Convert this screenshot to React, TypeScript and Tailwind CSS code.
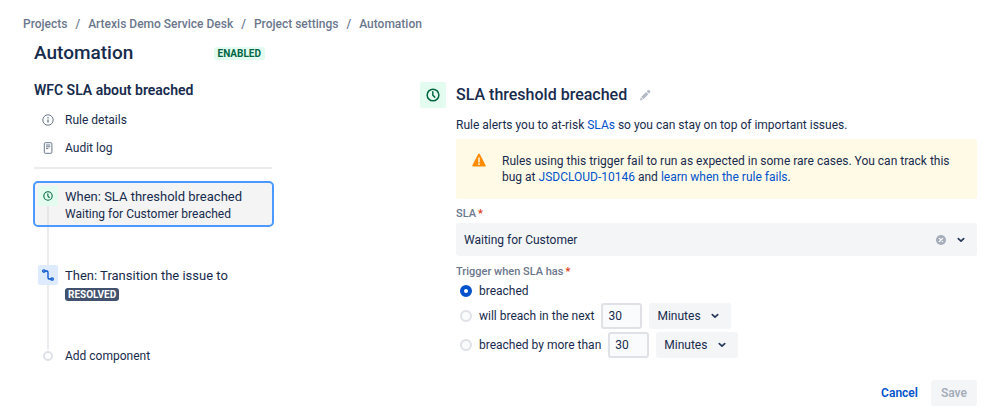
import React, { useState } from "react";

const breadcrumbs = ["Projects", "Artexis Demo Service Desk", "Project settings", "Automation"];

// --- Icons ---

function ClockIcon({ className }: { className?: string }) {
  return (
    <svg viewBox="0 0 16 16" fill="none" stroke="currentColor" strokeWidth="1.7" strokeLinecap="round" strokeLinejoin="round" className={className} aria-hidden={true}>
      <circle cx="8" cy="8" r="6.7" />
      <path d="M7.8 4.4v3.8l2.2 2.2" />
    </svg>
  );
}

function InfoIcon() {
  return (
    <svg viewBox="0 0 12 12" className="size-3 text-[#6b778c]" fill="none" stroke="currentColor" aria-hidden={true}>
      <circle cx="6" cy="6" r="5.2" />
      <path d="M6 5.4v3" strokeWidth="1.4" />
      <circle cx="6" cy="3.7" r="0.8" fill="currentColor" stroke="none" />
    </svg>
  );
}

function LogIcon() {
  return (
    <svg viewBox="0 0 12 12" className="size-3 text-[#6b778c]" fill="none" stroke="currentColor" aria-hidden={true}>
      <rect x="2.3" y="0.7" width="7.6" height="10.6" rx="1" />
      <path d="M4 3h4.2M4 4.8h4.2M4 6.6h2.4" />
    </svg>
  );
}

function TransitionIcon() {
  return (
    <svg viewBox="0 0 12 12" className="size-3 text-[#0052cc]" fill="none" stroke="currentColor" strokeWidth="1.3" aria-hidden={true}>
      <circle cx="1.9" cy="2" r="1.2" />
      <circle cx="10.1" cy="10" r="1.2" />
      <path d="M3.1 2h1.7Q6 2 6 3.2v5.6Q6 10 7.2 10h1.7" />
    </svg>
  );
}

function PencilIcon() {
  return (
    <svg viewBox="0 0 12 12" className="size-3" fill="currentColor" aria-hidden={true}>
      <path d="M8.9 1.2a1 1 0 0 1 1.4 0l.8.8a1 1 0 0 1 0 1.4l-1.2 1.2-2.2-2.2zM7.1 3l2.3 2.3-4.9 4.9-2.3-2.3zM1.7 8.4 4 10.7 1 11.4z" />
    </svg>
  );
}

function WarningIcon() {
  return (
    <svg viewBox="0 0 14 14" className="size-[14px] shrink-0" aria-hidden={true}>
      <path d="M6.2.9a.9.9 0 0 1 1.6 0l5.8 11.3a.9.9 0 0 1-.8 1.3H1.2a.9.9 0 0 1-.8-1.3z" fill="#ff8b00" />
      <path d="M7 5v4" stroke="#fffae6" strokeWidth="1.5" strokeLinecap="round" />
      <circle cx="7" cy="11.2" r="0.9" fill="#fffae6" />
    </svg>
  );
}

function ChevronIcon() {
  return (
    <svg viewBox="0 0 8 8" className="size-2 text-[#253858]" fill="none" stroke="currentColor" strokeWidth="1.7" strokeLinecap="round" strokeLinejoin="round" aria-hidden={true}>
      <path d="M1.3 2.7 4 5.2l2.7-2.5" />
    </svg>
  );
}

function ClearIcon() {
  return (
    <svg viewBox="0 0 10 10" className="size-[10px]" aria-hidden={true}>
      <circle cx="5" cy="5" r="5" fill="#a5adba" />
      <path d="M3.3 3.3l3.4 3.4M6.7 3.3 3.3 6.7" stroke="#fff" strokeWidth="1.2" strokeLinecap="round" />
    </svg>
  );
}

// --- Form parts ---

function Required() {
  return <span className="ml-0.5 text-[#de350b]">*</span>;
}

type DelayOptionProps = {
  id: string;
  label: string;
  checked: boolean;
  onSelect: (id: string) => void;
};

const radioClass =
  "size-3 shrink-0 appearance-none rounded-full border-2 border-[#dfe1e6] bg-[#fafbfc] checked:border-4 checked:border-[#0052cc] checked:bg-white";

function DelayOption({ id, label, checked, onSelect }: DelayOptionProps) {
  return (
    <div className="flex items-center">
      <input type="radio" id={id} name="trigger" checked={checked} onChange={() => onSelect(id)} className={radioClass} />
      <label htmlFor={id} className="pl-[7px]">
        {label}
      </label>
      <input
        type="text"
        defaultValue="30"
        aria-label={`${label} amount`}
        className="ml-[7px] h-[26px] w-[41px] rounded-[3px] border-2 border-[#dfe1e6] bg-[#fafbfc] px-[5px]"
      />
      <div className="relative ml-[7px]">
        <select aria-label={`${label} unit`} className="block h-[26px] w-[82px] appearance-none rounded-[3px] bg-[#f4f5f7] pl-2">
          <option>Minutes</option>
          <option>Hours</option>
          <option>Days</option>
        </select>
        <span className="pointer-events-none absolute inset-y-0 right-3 flex items-center">
          <ChevronIcon />
        </span>
      </div>
    </div>
  );
}

// --- Sections ---

function RuleSidebar() {
  return (
    <aside className="w-60 shrink-0">
      <div className="flex h-[22px] items-center justify-between pr-[9px]">
        <h1 className="text-[19px] leading-[22px] font-medium">Automation</h1>
        <span className="rounded-[3px] bg-[#e3fcef] px-1 text-[10px] leading-[13px] font-bold text-[#006644]">ENABLED</span>
      </div>
      <h2 className="mt-[17px] text-[14px] leading-[18px] font-semibold">WFC SLA about breached</h2>

      <nav className="mt-[7px] flex flex-col" aria-label="Rule">
        <a href="#details" className="flex h-7 items-center gap-[11px] pl-2">
          <InfoIcon />
          Rule details
        </a>
        <a href="#audit" className="flex h-7 items-center gap-[11px] pl-2">
          <LogIcon />
          Audit log
        </a>
      </nav>
      <hr className="mt-[5px] mr-[2px] border-t-2 border-[#ebecf0]" />

      {/* Rule steps */}
      <div className="mt-3 -ml-px">
        <button type="button" className="flex h-[46px] w-full rounded-[5px] border-2 border-[#4c9aff] bg-[#f4f4f4] pl-[3px] text-left">
          <span className="flex h-full w-5 shrink-0 flex-col items-center pt-[3px]">
            <span className="flex size-5 shrink-0 items-center justify-center rounded-[2px] bg-[#e3fcef]">
              <ClockIcon className="size-[10px] text-[#006644]" />
            </span>
            <span className="w-0.5 flex-1 bg-[#e6e7ea]" />
          </span>
          <span className="flex flex-col pt-[5px] pl-[7px]">
            <span className="text-[13px] leading-[18px]">When: SLA threshold breached</span>
            <span className="text-[12px] leading-4">Waiting for Customer breached</span>
          </span>
        </button>
        <div className="ml-[14px] h-[38px] w-0.5 bg-[#ebecf0]" />
        <div className="flex pl-[5px]">
          <div className="flex w-5 shrink-0 flex-col items-center">
            <span className="flex size-5 items-center justify-center rounded-[2px] bg-[#deebff]">
              <TransitionIcon />
            </span>
            <span className="h-[65px] w-0.5 bg-[#ebecf0]" />
          </div>
          <div className="flex flex-col items-start pt-0.5 pl-[7px]">
            <span className="text-[13px] leading-[18px]">Then: Transition the issue to</span>
            <span className="mt-[3px] rounded-[3px] bg-[#42526e] px-[3px] text-[10px] leading-[13px] font-bold text-white">RESOLVED</span>
          </div>
        </div>
        <button type="button" className="flex h-3 items-center pl-[10px]">
          <span className="size-[10px] rounded-full border-2 border-[#dfe1e6]" />
          <span className="pl-3">Add component</span>
        </button>
      </div>
    </aside>
  );
}

function TriggerForm() {
  const [trigger, setTrigger] = useState("breached");

  return (
    <main className="flex max-w-[557px] flex-1 gap-[10px] pt-10">
      <span className="flex size-[26px] shrink-0 items-center justify-center rounded-[2px] bg-[#e3fcef]">
        <ClockIcon className="size-[14px] text-[#006644]" />
      </span>
      <form className="min-w-0 flex-1" onSubmit={(e) => e.preventDefault()}>
        <div className="flex h-[26px] items-center gap-3">
          <h2 className="text-[16px] leading-[26px] font-medium">SLA threshold breached</h2>
          <button type="button" aria-label="Rename trigger" className="text-[#b3bac5]">
            <PencilIcon />
          </button>
        </div>
        <p className="mt-[9px] leading-4">
          Rule alerts you to at-risk{" "}
          <a href="#slas" className="text-[#0052cc]">
            SLAs
          </a>{" "}
          so you can stay on top of important issues.
        </p>

        <div className="mt-[6px] flex gap-4 rounded-[2px] bg-[#fffae6] px-4 py-[14px]">
          <WarningIcon />
          <p className="leading-4">
            Rules using this trigger fail to run as expected in some rare cases. You can track this bug at{" "}
            <a href="#issue" className="text-[#0052cc]">
              JSDCLOUD-10146
            </a>{" "}
            and{" "}
            <a href="#learn" className="text-[#0052cc]">
              learn when the rule fails
            </a>
            .
          </p>
        </div>

        <label htmlFor="sla" className="mt-[7px] block pb-px text-[11px] leading-4 font-medium text-[#6b778c]">
          SLA
          <Required />
        </label>
        <div className="relative">
          <select id="sla" className="block h-[33px] w-full appearance-none rounded-[3px] bg-[#f4f5f7] px-2">
            <option>Waiting for Customer</option>
          </select>
          <button type="button" aria-label="Clear SLA" className="absolute inset-y-0 right-[31px] flex items-center">
            <ClearIcon />
          </button>
          <span className="pointer-events-none absolute inset-y-0 right-3 flex items-center">
            <ChevronIcon />
          </span>
        </div>

        <fieldset>
          <legend className="pt-2 text-[11px] leading-4 font-medium text-[#6b778c]">
            Trigger when SLA has
            <Required />
          </legend>
          <div className="flex flex-col gap-[3px] pt-px pl-1">
            <div className="flex h-[19px] items-center">
              <input
                type="radio"
                id="breached"
                name="trigger"
                checked={trigger === "breached"}
                onChange={() => setTrigger("breached")}
                className={radioClass}
              />
              <label htmlFor="breached" className="pl-[7px]">
                breached
              </label>
            </div>
            <DelayOption id="upcoming" label="will breach in the next" checked={trigger === "upcoming"} onSelect={setTrigger} />
            <DelayOption id="overdue" label="breached by more than" checked={trigger === "overdue"} onSelect={setTrigger} />
          </div>
        </fieldset>

        <div className="mt-[22px] flex justify-end gap-1 font-semibold">
          <button type="button" className="h-[26px] px-[9px] text-[#0052cc]">
            Cancel
          </button>
          <button type="submit" disabled className="h-[26px] rounded-[3px] bg-[#f4f5f7] px-[10px] text-[#a5adba]">
            Save
          </button>
        </div>
      </form>
    </main>
  );
}

export default function App() {
  return (
    <div className="min-h-screen bg-white pt-4 pr-[22px] pb-3 font-['Roboto',sans-serif] text-[12px] text-[#172b4d]">
      <nav aria-label="Breadcrumb" className="pl-[23px]">
        <ol className="flex text-[12px] leading-4 font-medium text-[#6b778c]">
          {breadcrumbs.map((crumb, i) => (
            <li key={crumb}>
              {i > 0 && <span className="px-2">/</span>}
              <a href="#crumb">{crumb}</a>
            </li>
          ))}
        </ol>
      </nav>
      <div className="mt-[10px] flex justify-between pl-[34px]">
        <RuleSidebar />
        <TriggerForm />
      </div>
    </div>
  );
}
